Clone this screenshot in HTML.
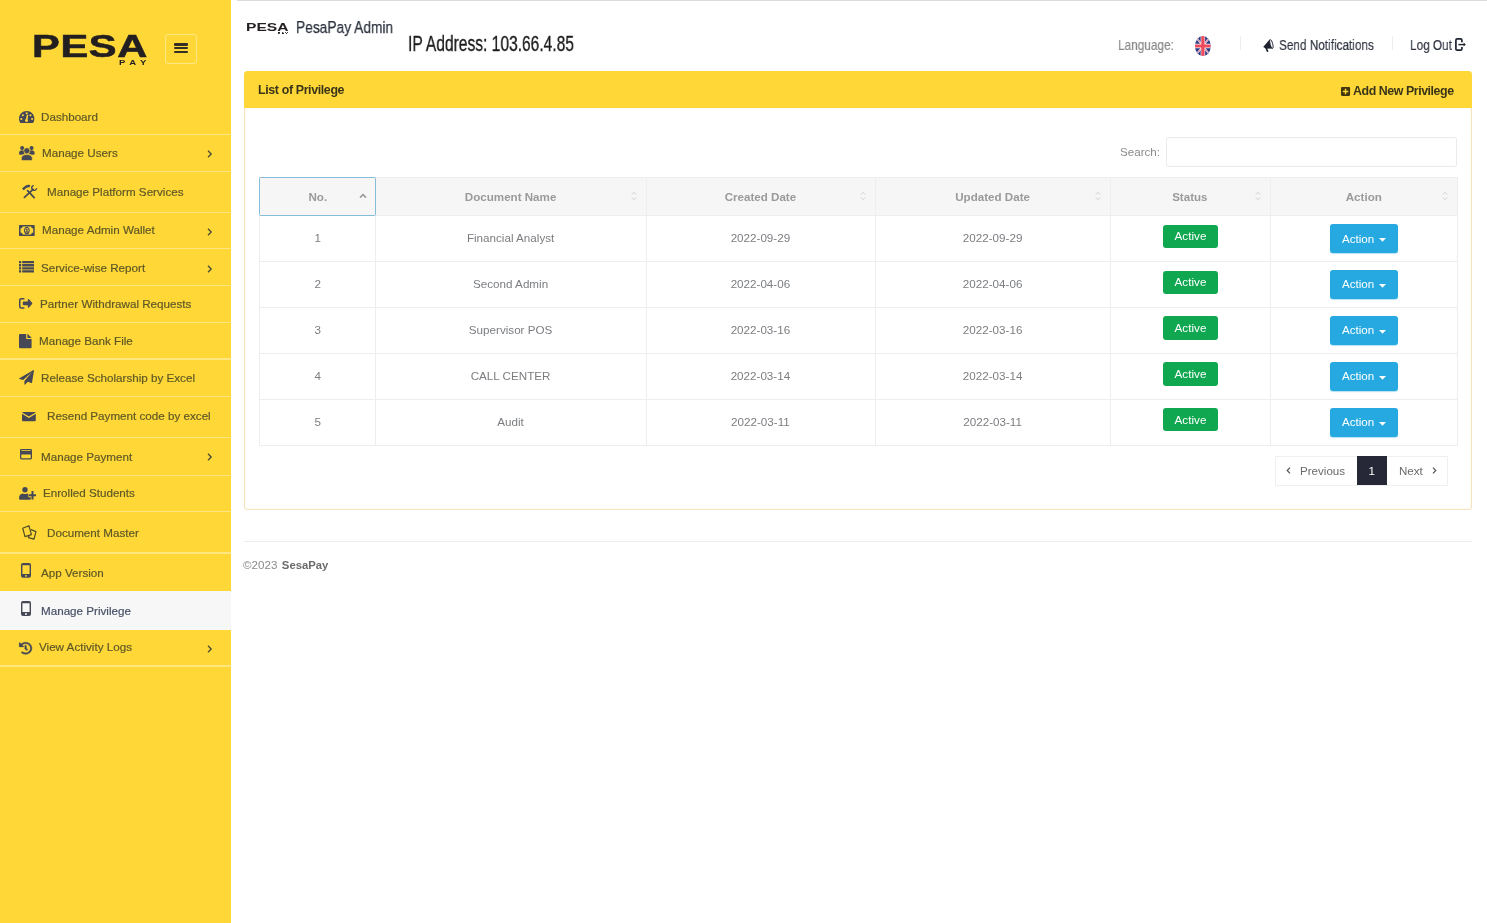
<!DOCTYPE html>
<html lang="en"><head><meta charset="utf-8"><title>PesaPay Admin - List of Privilege</title>
<style>
html,body{margin:0;padding:0}
body{width:1487px;height:923px;overflow:hidden;background:#fff;position:relative;font-family:"Liberation Sans",sans-serif;font-size:11.65px;color:#777}
.abs,.ic,.t{position:absolute}
.ic{display:block;overflow:visible}
.t{white-space:nowrap;line-height:14px;will-change:transform}
#side{position:absolute;left:0;top:0;width:231px;height:923px;background:#FFD838}
.div{position:absolute;left:0;width:231px;height:1.4px;background:rgba(255,255,255,.36)}
.nav{color:#5f5826;-webkit-text-stroke-width:.2px}
.cond{transform-origin:0 50%;display:inline-block}
table{border-collapse:collapse}
</style></head><body>

<nav id="side">
<div class="abs" style="left:0;top:591.2px;width:231px;height:38.5px;background:#f7f7f8"></div>
<div class="div" style="top:133.7px"></div>
<div class="div" style="top:170.6px"></div>
<div class="div" style="top:212.0px"></div>
<div class="div" style="top:248.1px"></div>
<div class="div" style="top:284.7px"></div>
<div class="div" style="top:321.6px"></div>
<div class="div" style="top:358.3px"></div>
<div class="div" style="top:396.1px"></div>
<div class="div" style="top:436.5px"></div>
<div class="div" style="top:474.6px"></div>
<div class="div" style="top:510.5px"></div>
<div class="div" style="top:552.3px"></div>
<div class="div" style="top:665.4px"></div>
<div class="t" id="logo" style="left:31.6px;top:26.4px;font-weight:bold;font-size:30.6px;line-height:40px;color:#231f20;transform:scaleX(1.36);transform-origin:0 0;letter-spacing:.5px;-webkit-text-stroke:.6px #231f20">PESA</div>
<div class="t" id="logopay" style="left:118.6px;top:58.2px;font-weight:bold;font-size:7.4px;line-height:10px;color:#231f20;letter-spacing:3.6px;transform:scaleX(1.3);transform-origin:0 0">PAY</div>
<div class="abs" style="left:164.8px;top:33.5px;width:29.9px;height:28.9px;border:1.3px solid rgba(255,255,255,.38);border-radius:3px"></div>
<div class="abs" style="left:174.1px;top:43.45px;width:13.7px;height:2.2px;background:#332f24;border-radius:1.1px"></div>
<div class="abs" style="left:174.1px;top:47.3px;width:13.7px;height:2.2px;background:#332f24;border-radius:1.1px"></div>
<div class="abs" style="left:174.1px;top:51.1px;width:13.7px;height:2.2px;background:#332f24;border-radius:1.1px"></div>
<svg class="ic" style="left:18.8px;top:110.7px;width:15.4px;height:12.0px" viewBox="0 0 154 120" preserveAspectRatio="none" fill="#464855"><path d="M77 0C34 0 0 34 0 77c0 14 4 27 10 37q3 6 9 6h116q6 0 9-6c6-10 10-23 10-37C154 34 120 0 77 0z"/><g fill="#FFD838"><circle cx="77" cy="23" r="10.5"/><circle cx="39" cy="42" r="10.500"/><circle cx="115" cy="42" r="10.500"/><circle cx="23" cy="80" r="10.500"/><circle cx="131" cy="80" r="10.500"/><path d="M80 36 L93 39 L86 84 A15 15 0 1 1 69 81z"/></g></svg>
<div class="t nav" style="left:41.3px;top:110.26px;color:#5f5826">Dashboard</div>
<svg class="ic" style="left:18.8px;top:145.5px;width:15.7px;height:14.5px" viewBox="0 0 157 145" preserveAspectRatio="none" fill="#464855"><circle cx="31" cy="20" r="20"/><circle cx="126" cy="20" r="20"/><path d="M0 76C0 52 12 42 31 42c8 0 15 2 20 6-5 10-3 22 6 30-12 3-20 9-26 9H9c-6 0-9-4-9-11zM157 76c0-24-12-34-31-34-8 0-15 2-20 6 5 10 3 22-6 30 12 3 20 9 26 9h22c6 0 9-4 9-11z"/><g stroke="#FFD838" stroke-width="5"><circle cx="78.500" cy="48" r="30"/><path d="M23 131C23 98 46 86 78.500 86S134 98 134 131q0 14-12 14H35q-12 0-12-14z"/></g></svg>
<div class="t nav" style="left:42.3px;top:146.26px;color:#5f5826">Manage Users</div>
<svg class="ic" style="left:207.4px;top:150.3px;width:5px;height:8px" viewBox="0 0 5 8" fill="none" stroke="#4b4a35" stroke-width="1.3"><path d="M1 .8 L4.2 4 L1 7.2"/></svg>
<svg class="ic" style="left:22.0px;top:185.0px;width:15.0px;height:13.3px" viewBox="0 0 150 133" preserveAspectRatio="none" fill="#464855"><g stroke="#464855" fill="none"><path d="M24 124 L108 46" stroke-width="17" stroke-linecap="round"/><path d="M122 126 L56 56" stroke-width="17" stroke-linecap="round"/><path d="M8 44 L40 18 Q58 6 80 12" stroke-width="24"/><path d="M98 38 q-6 -24 14 -32 M112 52 q24 8 34 -14" stroke-width="13" stroke-linecap="round"/><path d="M104 46 l10 -10" stroke-width="20"/></g></svg>
<div class="t nav" style="left:47.2px;top:185.26px;color:#5f5826">Manage Platform Services</div>
<svg class="ic" style="left:18.8px;top:224.7px;width:15.7px;height:11.1px" viewBox="0 0 157 111" preserveAspectRatio="none" fill="#464855"><path fill-rule="evenodd" d="M7 0h143q7 0 7 7v97q0 7-7 7H7q-7 0-7-7V7q0-7 7-7zM36 15a22 22 0 0 1-21 21v39a22 22 0 0 1 21 21h85a22 22 0 0 1 21-21V36a22 22 0 0 1-21-21z"/><path fill-rule="evenodd" d="M78.500 18a29 37.500 0 1 0 .1 0zM78.500 30a18 25.500 0 1 1-.1 0z"/><path d="M73 38h12v28h7v9H66v-9h8V49h-6v-7z"/></svg>
<div class="t nav" style="left:42.3px;top:223.26px;color:#5f5826">Manage Admin Wallet</div>
<svg class="ic" style="left:207.4px;top:227.5px;width:5px;height:8px" viewBox="0 0 5 8" fill="none" stroke="#4b4a35" stroke-width="1.3"><path d="M1 .8 L4.2 4 L1 7.2"/></svg>
<svg class="ic" style="left:18.8px;top:261.0px;width:15.0px;height:11.6px" viewBox="0 0 150 116" preserveAspectRatio="none" fill="#464855"><path d="M0 0h22v23H0zM32 0h118v23H32zM0 31h22v23H0zM32 31h118v23H32zM0 62h22v23H0zM32 62h118v23H32zM0 93h22v23H0zM32 93h118v23H32z"/></svg>
<div class="t nav" style="left:41.3px;top:261.26px;color:#5f5826">Service-wise Report</div>
<svg class="ic" style="left:207.4px;top:264.9px;width:5px;height:8px" viewBox="0 0 5 8" fill="none" stroke="#4b4a35" stroke-width="1.3"><path d="M1 .8 L4.2 4 L1 7.2"/></svg>
<svg class="ic" style="left:18.5px;top:298.4px;width:13.4px;height:10.7px" viewBox="0 0 134 107" preserveAspectRatio="none" fill="#464855"><path d="M50 0q6 0 6 7t-6 7H26q-11 0-11 11v57q0 11 11 11h24q6 0 6 7t-6 7H26Q0 107 0 82V25Q0 0 26 0z"/><path d="M88 18c0-7 7-10 12-5l31 34c4 4 4 9 0 13l-31 34c-5 5-12 2-12-5V73H46c-5 0-8-3-8-8V42c0-5 3-8 8-8h42z"/></svg>
<div class="t nav" style="left:40.3px;top:297.26px;color:#5f5826">Partner Withdrawal Requests</div>
<svg class="ic" style="left:18.8px;top:334.1px;width:12.6px;height:14.2px" viewBox="0 0 126 142" preserveAspectRatio="none" fill="#464855"><path d="M10 0h62v42q0 9 9 9h45v81q0 10-10 10H10Q0 142 0 132V10Q0 0 10 0z"/><path d="M84 0q4 0 7 3l32 32q3 3 3 6H88q-4 0-4-4z"/></svg>
<div class="t nav" style="left:39.3px;top:334.26px;color:#5f5826">Manage Bank File</div>
<svg class="ic" style="left:18.8px;top:369.9px;width:15.0px;height:14.7px" viewBox="0 0 150 147" preserveAspectRatio="none" fill="#464855"><path d="M146 1q5-2 4 4l-20 122q-1 6-7 4L88 118l-26 26q-8 7-8-3v-30l78-92-90 82L4 90q-7-3 0-8z"/></svg>
<div class="t nav" style="left:41.3px;top:371.26px;color:#5f5826">Release Scholarship by Excel</div>
<svg class="ic" style="left:22.3px;top:411.6px;width:13.8px;height:9.3px" viewBox="0 0 138 93" preserveAspectRatio="none" fill="#464855"><path d="M10 0h118q6 0 9 4L69 46 1 4q3-4 9-4zM0 18l69 43 69-43v65q0 10-10 10H10Q0 93 0 83z"/></svg>
<div class="t nav" style="left:47.4px;top:409.26px;color:#5f5826">Resend Payment code by excel</div>
<svg class="ic" style="left:20.1px;top:449.1px;width:12.0px;height:10.5px" viewBox="0 0 120 105" preserveAspectRatio="none" fill="#464855"><path fill-rule="evenodd" d="M14 0h92q14 0 14 14v77q0 14-14 14H14Q0 105 0 91V14Q0 0 14 0zM13 56v33q0 3 3 3h88q3 0 3-3V56zM16 13q-3 0-3 3v5h94v-5q0-3-3-3zM13 27h94v1H13z"/></svg>
<div class="t nav" style="left:41.3px;top:450.26px;color:#5f5826">Manage Payment</div>
<svg class="ic" style="left:207.4px;top:452.8px;width:5px;height:8px" viewBox="0 0 5 8" fill="none" stroke="#4b4a35" stroke-width="1.3"><path d="M1 .8 L4.2 4 L1 7.2"/></svg>
<svg class="ic" style="left:18.8px;top:487.3px;width:17.0px;height:12.7px" viewBox="0 0 170 127" preserveAspectRatio="none" fill="#464855"><circle cx="60" cy="28" r="27"/><path d="M0 110C0 82 16 66 38 64q10 7 22 7t22-7c22 2 38 18 38 46v4q0 13-13 13H13q-13 0-13-13z"/><path fill="#FFD838" d="M119 33h32v30h19v40h-19v24h-32v-24H94V63h25z"/><path d="M125 40h20v32h25v20h-25v32h-20V92h-25V72h25z"/></svg>
<div class="t nav" style="left:43.3px;top:486.26px;color:#5f5826">Enrolled Students</div>
<svg class="ic" style="left:22.0px;top:524.9px;width:14.7px;height:14.9px" viewBox="0 0 147 149" preserveAspectRatio="none" fill="#464855"><g fill="none" stroke="#4d4a26" stroke-width="12" stroke-linejoin="round"><path d="M7 32 L70 8 L94 96 L30 116z"/><path d="M90 46 L140 66 L120 142 L64 126 L72 106"/></g></svg>
<div class="t nav" style="left:47.2px;top:526.26px;color:#5f5826">Document Master</div>
<svg class="ic" style="left:21.2px;top:563.2px;width:10.0px;height:14.8px" viewBox="0 0 100 148" preserveAspectRatio="none" fill="#464855"><path fill-rule="evenodd" d="M20 0h60q20 0 20 20v108q0 20-20 20H20q-20 0-20-20V20Q0 0 20 0zM14 22v88h72V22zM40 122v14h20v-14z"/></svg>
<div class="t nav" style="left:40.7px;top:566.26px;color:#5f5826">App Version</div>
<svg class="ic" style="left:21.2px;top:601.1px;width:10.0px;height:14.9px" viewBox="0 0 100 148" preserveAspectRatio="none" fill="#464855"><path fill-rule="evenodd" d="M20 0h60q20 0 20 20v108q0 20-20 20H20q-20 0-20-20V20Q0 0 20 0zM14 22v88h72V22zM40 122v14h20v-14z"/></svg>
<div class="t nav" style="left:40.8px;top:604.26px;color:#475066">Manage Privilege</div>
<svg class="ic" style="left:18.5px;top:641.5px;width:13.2px;height:12.5px" viewBox="0 0 512 512" preserveAspectRatio="none" fill="#464855"><path stroke="#464855" stroke-width="14" d="M504 255.531c.253 136.640-111.180 248.372-247.820 248.468-59.015.042-113.223-20.530-155.822-54.911-11.077-8.940-11.905-25.541-1.839-35.607l11.267-11.267c8.609-8.609 22.353-9.551 31.891-1.984C173.062 425.135 212.781 440 256 440c101.705 0 184-82.311 184-184 0-101.705-82.311-184-184-184-48.814 0-93.149 18.969-126.068 49.932l50.754 50.754c10.080 10.080 2.941 27.314-11.313 27.314H24c-8.837 0-16-7.163-16-16V38.627c0-14.254 17.234-21.393 27.314-11.314l49.372 49.372C129.209 34.136 189.552 8 256 8c136.810 0 247.747 110.780 248 247.531zm-180.912 78.784l9.823-12.630c8.138-10.463 6.253-25.542-4.210-33.679L288 256.349V152c0-13.255-10.745-24-24-24h-16c-13.255 0-24 10.745-24 24v135.651l65.409 50.874c10.463 8.137 25.541 6.253 33.679-4.210z"/></svg>
<div class="t nav" style="left:39.3px;top:640.26px;color:#5f5826">View Activity Logs</div>
<svg class="ic" style="left:207.4px;top:644.6px;width:5px;height:8px" viewBox="0 0 5 8" fill="none" stroke="#4b4a35" stroke-width="1.3"><path d="M1 .8 L4.2 4 L1 7.2"/></svg>
</nav>
<div class="abs" style="left:237px;top:0;width:1250px;height:1px;background:#dcdcdc"></div>
<div class="t" id="slogo" style="left:245.9px;top:19.2px;font-weight:bold;font-size:11.6px;line-height:16px;color:#231f20;transform:scaleX(1.345);transform-origin:0 0">PESA</div>
<div class="t" id="slogopay" style="left:277.8px;top:31.9px;font-weight:bold;font-size:10.8px;line-height:12px;color:#231f20;letter-spacing:4.6px;-webkit-text-stroke:.8px #231f20;transform:scale(.325,.2);transform-origin:0 0">PAY</div>
<div class="t" id="ttl" style="left:295.8px;top:15.1px;font-size:16.9px;line-height:26px;color:#2a303c;-webkit-text-stroke:.25px #2a303c;transform:scaleX(.815);transform-origin:0 0">PesaPay Admin</div>
<div class="t" id="ip" style="left:408.2px;top:28.9px;font-size:21.2px;line-height:30px;color:#1c1c1c;-webkit-text-stroke:.3px #1c1c1c;transform:scaleX(.735);transform-origin:0 0">IP Address: 103.66.4.85</div>
<div class="t" id="lang" style="left:1117.5px;top:33.2px;font-size:14.4px;line-height:24px;color:#888;-webkit-text-stroke:.2px #888;transform:scaleX(.822);transform-origin:0 0">Language:</div>
<svg class="ic" id="flag" style="left:1195.1px;top:36.1px;width:15.8px;height:20.1px" viewBox="0 0 60 60" preserveAspectRatio="none"><defs><clipPath id="fc"><circle cx="30" cy="30" r="30"/></clipPath></defs><g clip-path="url(#fc)"><rect width="60" height="60" fill="#2a3b86"/><path d="M0 0L60 60M60 0L0 60" stroke="#e9ebf4" stroke-width="6"/><path d="M0 0L60 60M60 0L0 60" stroke="#e8475a" stroke-width="2"/><path d="M30 0V60" stroke="#fff" stroke-width="17"/><path d="M0 30H60" stroke="#fff" stroke-width="13"/><path d="M30 0V60" stroke="#ee4a5c" stroke-width="12.5"/><path d="M0 30H60" stroke="#ee4a5c" stroke-width="9"/></g></svg>
<div class="abs" style="left:1240.4px;top:35.5px;width:1px;height:14px;background:#eeeeee"></div>
<div class="abs" style="left:1392px;top:35.5px;width:1px;height:14px;background:#eeeeee"></div>
<svg class="ic" id="mega" style="left:1262.7px;top:38.8px;width:10.4px;height:12.8px" viewBox="0 0 104 128" fill="#1f2330"><path d="M2 80 L68 2 L96 96 L34 98z"/><path d="M22 90 l14 -6 l18 36 q2 6 -4 8 l-6 2 q-5 1 -7 -4z"/><ellipse cx="84" cy="50" rx="13" ry="45" transform="rotate(-14 84 50)" fill="#fff" stroke="#1f2330" stroke-width="9"/></svg>
<div class="t" id="sendn" style="left:1278.8px;top:33.2px;font-size:15.2px;line-height:24px;color:#2f3440;-webkit-text-stroke:.2px #2f3440;transform:scaleX(.775);transform-origin:0 0">Send Notifications</div>
<div class="t" id="logout" style="left:1410.4px;top:33.2px;font-size:15.2px;line-height:24px;color:#2f3440;-webkit-text-stroke:.2px #2f3440;transform:scaleX(.777);transform-origin:0 0">Log Out</div>
<svg class="ic" id="lo" style="left:1455.3px;top:38.1px;width:10.8px;height:13.1px" viewBox="0 0 108 131" fill="none" stroke="#1f2330"><path d="M69 42 V22 q0-13-13-13 H22 q-13 0-13 13 v87 q0 13 13 13 h34 q13 0 13-13 v-20" stroke-width="17"/><path d="M34 66 H96" stroke-width="14"/><path d="M86 46 L108 66 L86 86z" fill="#1f2330" stroke="none"/></svg>
<div class="abs" id="card" style="left:243.5px;top:70.6px;width:1226.4px;height:437.9px;border:1px solid #f6e3c0;box-shadow:inset 0 0 2px rgba(255,236,170,.5);border-radius:3px;background:#fff;box-sizing:content-box"></div>
<div class="abs" id="cardh" style="left:243.5px;top:70.6px;width:1228.4px;height:37.2px;background:#FFD838;border-radius:4px 4px 0 0"></div>
<div class="t" id="lop" style="left:257.7px;top:82.6px;font-weight:bold;font-size:12.4px;letter-spacing:-.36px;color:#3a3418">List of Privilege</div>
<svg class="ic" style="left:1340.8px;top:86.8px;width:9.1px;height:9px" viewBox="0 0 93 92" fill="#40370f"><path fill-rule="evenodd" d="M12 0h69c7 0 12 5 12 12v68c0 7-5 12-12 12H12C5 92 0 87 0 80V12C0 5 5 0 12 0zM39 18v21H18v14h21v21h15V53h21V39H54V18z"/></svg>
<div class="t" id="anp" style="left:1353.4px;top:84.4px;font-weight:bold;font-size:12.4px;letter-spacing:-.44px;color:#3a3418">Add New Privilege</div>
<div class="t" id="srch" style="left:1120.2px;top:145.2px;font-size:11.6px;color:#8a8a8a">Search:</div>
<div class="abs" style="left:1165.9px;top:137.2px;width:288.7px;height:27.5px;border:1px solid #ebebeb;border-radius:2px"></div>
<div class="abs" style="left:259.5px;top:177px;width:1198.2px;height:38.4px;background:#f6f6f6"></div>
<div class="abs" style="left:259.0px;top:177px;width:1px;height:268.1px;background:#eeeeee"></div>
<div class="abs" style="left:374.7px;top:177px;width:1px;height:268.1px;background:#eeeeee"></div>
<div class="abs" style="left:645.9px;top:177px;width:1px;height:268.1px;background:#eeeeee"></div>
<div class="abs" style="left:874.7px;top:177px;width:1px;height:268.1px;background:#eeeeee"></div>
<div class="abs" style="left:1109.9px;top:177px;width:1px;height:268.1px;background:#eeeeee"></div>
<div class="abs" style="left:1269.6px;top:177px;width:1px;height:268.1px;background:#eeeeee"></div>
<div class="abs" style="left:1457.2px;top:177px;width:1px;height:268.1px;background:#eeeeee"></div>
<div class="abs" style="left:259.0px;top:176.5px;width:1199.2px;height:1px;background:#eeeeee"></div>
<div class="abs" style="left:259.0px;top:214.9px;width:1199.2px;height:1px;background:#eeeeee"></div>
<div class="abs" style="left:259.0px;top:260.8px;width:1199.2px;height:1px;background:#eeeeee"></div>
<div class="abs" style="left:259.0px;top:306.7px;width:1199.2px;height:1px;background:#eeeeee"></div>
<div class="abs" style="left:259.0px;top:352.7px;width:1199.2px;height:1px;background:#eeeeee"></div>
<div class="abs" style="left:259.0px;top:398.6px;width:1199.2px;height:1px;background:#eeeeee"></div>
<div class="abs" style="left:259.0px;top:444.6px;width:1199.2px;height:1px;background:#eeeeee"></div>
<div class="abs" style="left:259.2px;top:176.8px;width:114.7px;height:37.4px;border:1.3px solid #84bdd9;border-radius:1.5px"></div>
<div class="t th" style="left:259.5px;width:115.7px;text-align:center;top:189.58px;font-weight:bold;font-size:11.6px;color:#9a9a9a">No.</div>
<svg class="ic" style="left:358.6px;top:193px;width:8px;height:6px" viewBox="0 0 8 6" fill="none" stroke="#9a9a9a" stroke-width="1.5"><path d="M1 4.6 L4 1.6 L7 4.6"/></svg>
<div class="t th" style="left:375.2px;width:271.2px;text-align:center;top:189.58px;font-weight:bold;font-size:11.6px;color:#9a9a9a">Document Name</div>
<svg class="ic" style="left:630.8px;top:191px;width:6px;height:10px" viewBox="0 0 6 10" fill="none" stroke="#d2d2d2" stroke-width="1"><path d="M.8 3.6 L3 1.2 L5.2 3.6M.8 6.4 L3 8.8 L5.2 6.4"/></svg>
<div class="t th" style="left:646.4px;width:228.8px;text-align:center;top:189.58px;font-weight:bold;font-size:11.6px;color:#9a9a9a">Created Date</div>
<svg class="ic" style="left:859.6px;top:191px;width:6px;height:10px" viewBox="0 0 6 10" fill="none" stroke="#d2d2d2" stroke-width="1"><path d="M.8 3.6 L3 1.2 L5.2 3.6M.8 6.4 L3 8.8 L5.2 6.4"/></svg>
<div class="t th" style="left:875.2px;width:235.2px;text-align:center;top:189.58px;font-weight:bold;font-size:11.6px;color:#9a9a9a">Updated Date</div>
<svg class="ic" style="left:1094.8px;top:191px;width:6px;height:10px" viewBox="0 0 6 10" fill="none" stroke="#d2d2d2" stroke-width="1"><path d="M.8 3.6 L3 1.2 L5.2 3.6M.8 6.4 L3 8.8 L5.2 6.4"/></svg>
<div class="t th" style="left:1110.4px;width:159.7px;text-align:center;top:189.58px;font-weight:bold;font-size:11.6px;color:#9a9a9a">Status</div>
<svg class="ic" style="left:1254.5px;top:191px;width:6px;height:10px" viewBox="0 0 6 10" fill="none" stroke="#d2d2d2" stroke-width="1"><path d="M.8 3.6 L3 1.2 L5.2 3.6M.8 6.4 L3 8.8 L5.2 6.4"/></svg>
<div class="t th" style="left:1270.1px;width:187.6px;text-align:center;top:189.58px;font-weight:bold;font-size:11.6px;color:#9a9a9a">Action</div>
<svg class="ic" style="left:1442.1px;top:191px;width:6px;height:10px" viewBox="0 0 6 10" fill="none" stroke="#d2d2d2" stroke-width="1"><path d="M.8 3.6 L3 1.2 L5.2 3.6M.8 6.4 L3 8.8 L5.2 6.4"/></svg>
<div class="t td" style="left:259.5px;width:115.7px;text-align:center;top:231.36px;font-size:11.65px;color:#7b7d80">1</div>
<div class="t td" style="left:375.2px;width:271.2px;text-align:center;top:231.36px;font-size:11.65px;color:#7b7d80">Financial Analyst</div>
<div class="t td" style="left:646.4px;width:228.8px;text-align:center;top:231.36px;font-size:11.65px;color:#7b7d80">2022-09-29</div>
<div class="t td" style="left:875.2px;width:235.2px;text-align:center;top:231.36px;font-size:11.65px;color:#7b7d80">2022-09-29</div>
<div class="abs badge" style="left:1162.8px;top:224.6px;width:55px;height:23.2px;background:#10a751;border-radius:3px"></div>
<div class="t" style="left:1162.8px;width:55px;text-align:center;top:229.1px;font-size:11.7px;color:#fff">Active</div>
<div class="abs btn" style="left:1330.2px;top:224.1px;width:68px;height:29.2px;background:#26a9e0;border-radius:3px;box-shadow:0 1px 1px rgba(38,169,224,.35)"></div>
<div class="t" style="left:1342.3px;top:231.5px;font-size:11.6px;color:#fff">Action</div>
<svg class="ic" style="left:1378.7px;top:237.8px;width:7px;height:3.7px" viewBox="0 0 7 3.7" fill="#fff"><path d="M0 0H7L3.500 3.700z"/></svg>
<div class="t td" style="left:259.5px;width:115.7px;text-align:center;top:277.26px;font-size:11.65px;color:#7b7d80">2</div>
<div class="t td" style="left:375.2px;width:271.2px;text-align:center;top:277.26px;font-size:11.65px;color:#7b7d80">Second Admin</div>
<div class="t td" style="left:646.4px;width:228.8px;text-align:center;top:277.26px;font-size:11.65px;color:#7b7d80">2022-04-06</div>
<div class="t td" style="left:875.2px;width:235.2px;text-align:center;top:277.26px;font-size:11.65px;color:#7b7d80">2022-04-06</div>
<div class="abs badge" style="left:1162.8px;top:270.5px;width:55px;height:23.2px;background:#10a751;border-radius:3px"></div>
<div class="t" style="left:1162.8px;width:55px;text-align:center;top:275.0px;font-size:11.7px;color:#fff">Active</div>
<div class="abs btn" style="left:1330.2px;top:270.0px;width:68px;height:29.2px;background:#26a9e0;border-radius:3px;box-shadow:0 1px 1px rgba(38,169,224,.35)"></div>
<div class="t" style="left:1342.3px;top:277.4px;font-size:11.6px;color:#fff">Action</div>
<svg class="ic" style="left:1378.7px;top:283.7px;width:7px;height:3.7px" viewBox="0 0 7 3.7" fill="#fff"><path d="M0 0H7L3.500 3.700z"/></svg>
<div class="t td" style="left:259.5px;width:115.7px;text-align:center;top:323.16px;font-size:11.65px;color:#7b7d80">3</div>
<div class="t td" style="left:375.2px;width:271.2px;text-align:center;top:323.16px;font-size:11.65px;color:#7b7d80">Supervisor POS</div>
<div class="t td" style="left:646.4px;width:228.8px;text-align:center;top:323.16px;font-size:11.65px;color:#7b7d80">2022-03-16</div>
<div class="t td" style="left:875.2px;width:235.2px;text-align:center;top:323.16px;font-size:11.65px;color:#7b7d80">2022-03-16</div>
<div class="abs badge" style="left:1162.8px;top:316.4px;width:55px;height:23.2px;background:#10a751;border-radius:3px"></div>
<div class="t" style="left:1162.8px;width:55px;text-align:center;top:320.9px;font-size:11.7px;color:#fff">Active</div>
<div class="abs btn" style="left:1330.2px;top:315.9px;width:68px;height:29.2px;background:#26a9e0;border-radius:3px;box-shadow:0 1px 1px rgba(38,169,224,.35)"></div>
<div class="t" style="left:1342.3px;top:323.3px;font-size:11.6px;color:#fff">Action</div>
<svg class="ic" style="left:1378.7px;top:329.6px;width:7px;height:3.7px" viewBox="0 0 7 3.7" fill="#fff"><path d="M0 0H7L3.500 3.700z"/></svg>
<div class="t td" style="left:259.5px;width:115.7px;text-align:center;top:369.16px;font-size:11.65px;color:#7b7d80">4</div>
<div class="t td" style="left:375.2px;width:271.2px;text-align:center;top:369.16px;font-size:11.65px;color:#7b7d80">CALL CENTER</div>
<div class="t td" style="left:646.4px;width:228.8px;text-align:center;top:369.16px;font-size:11.65px;color:#7b7d80">2022-03-14</div>
<div class="t td" style="left:875.2px;width:235.2px;text-align:center;top:369.16px;font-size:11.65px;color:#7b7d80">2022-03-14</div>
<div class="abs badge" style="left:1162.8px;top:362.4px;width:55px;height:23.2px;background:#10a751;border-radius:3px"></div>
<div class="t" style="left:1162.8px;width:55px;text-align:center;top:366.9px;font-size:11.7px;color:#fff">Active</div>
<div class="abs btn" style="left:1330.2px;top:361.9px;width:68px;height:29.2px;background:#26a9e0;border-radius:3px;box-shadow:0 1px 1px rgba(38,169,224,.35)"></div>
<div class="t" style="left:1342.3px;top:369.3px;font-size:11.6px;color:#fff">Action</div>
<svg class="ic" style="left:1378.7px;top:375.6px;width:7px;height:3.7px" viewBox="0 0 7 3.7" fill="#fff"><path d="M0 0H7L3.500 3.700z"/></svg>
<div class="t td" style="left:259.5px;width:115.7px;text-align:center;top:415.06px;font-size:11.65px;color:#7b7d80">5</div>
<div class="t td" style="left:375.2px;width:271.2px;text-align:center;top:415.06px;font-size:11.65px;color:#7b7d80">Audit</div>
<div class="t td" style="left:646.4px;width:228.8px;text-align:center;top:415.06px;font-size:11.65px;color:#7b7d80">2022-03-11</div>
<div class="t td" style="left:875.2px;width:235.2px;text-align:center;top:415.06px;font-size:11.65px;color:#7b7d80">2022-03-11</div>
<div class="abs badge" style="left:1162.8px;top:408.3px;width:55px;height:23.2px;background:#10a751;border-radius:3px"></div>
<div class="t" style="left:1162.8px;width:55px;text-align:center;top:412.8px;font-size:11.7px;color:#fff">Active</div>
<div class="abs btn" style="left:1330.2px;top:407.8px;width:68px;height:29.2px;background:#26a9e0;border-radius:3px;box-shadow:0 1px 1px rgba(38,169,224,.35)"></div>
<div class="t" style="left:1342.3px;top:415.2px;font-size:11.6px;color:#fff">Action</div>
<svg class="ic" style="left:1378.7px;top:421.5px;width:7px;height:3.7px" viewBox="0 0 7 3.7" fill="#fff"><path d="M0 0H7L3.500 3.700z"/></svg>
<div class="abs" style="left:1275.2px;top:455.6px;width:170.9px;height:28.8px;border:1px solid #efefef;border-radius:1px"></div>
<div class="abs" style="left:1357.1px;top:456.1px;width:29.7px;height:29.3px;background:#262837"></div>
<svg class="ic" style="left:1285.6px;top:466.6px;width:5px;height:7px" viewBox="0 0 5 7" fill="none" stroke="#555" stroke-width="1.2"><path d="M4 .6 L1.2 3.500 L4 6.400"/></svg>
<div class="t" style="left:1299.5px;top:463.78px;font-size:11.6px;color:#6a6a6a">Previous</div>
<div class="t" style="left:1357.1px;width:29.7px;text-align:center;top:463.78px;font-size:11.6px;color:#fff">1</div>
<div class="t" style="left:1399.1px;top:463.78px;font-size:11.6px;color:#6a6a6a">Next</div>
<svg class="ic" style="left:1432.4px;top:466.6px;width:5px;height:7px" viewBox="0 0 5 7" fill="none" stroke="#555" stroke-width="1.2"><path d="M1 .6 L3.800 3.500 L1 6.400"/></svg>
<div class="abs" style="left:243.5px;top:541.2px;width:1228px;height:1px;background:#ececec"></div>
<div class="t" id="foot" style="left:243.3px;top:557.98px;font-size:11.6px;color:#8a8a8a">©2023 <b style="color:#6b6b6b;font-size:11.3px;margin-left:1.3px;letter-spacing:0">SesaPay</b></div>
</body></html>
